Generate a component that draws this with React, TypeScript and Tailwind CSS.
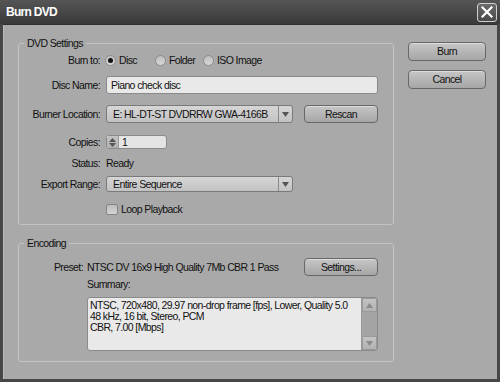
import React from "react";

const font = "font-['Liberation_Sans',Arial,sans-serif]";

function Button({ label, className = "" }: { label: string; className?: string }) {
  return (
    <div
      className={`flex items-center justify-center rounded-[4px] border border-[#686868] bg-gradient-to-b from-[#c6c6c6] to-[#a6a6a6] shadow-[inset_0_1px_0_#dcdcdc] ${className}`}
    >
      {label}
    </div>
  );
}

function Select({ value }: { value: string }) {
  return (
    <div className="flex h-full w-[187px] rounded-[3px] border border-[#7a7a7a] bg-gradient-to-b from-[#d6d6d6] to-[#c2c2c2]">
      <div className="flex flex-1 items-center pl-[6px]">{value}</div>
      <div className="flex w-[14px] items-center justify-center border-l border-[#8a8a8a]">
        <svg width="7" height="5" viewBox="0 0 7 5">
          <path d="M0 0H7L3.5 5Z" fill="#555" />
        </svg>
      </div>
    </div>
  );
}

function Radio({ checked }: { checked?: boolean }) {
  return (
    <div className="flex h-[11px] w-[11px] items-center justify-center rounded-full border border-[#8c8c8c] bg-gradient-to-b from-[#bdbdbd] to-[#d8d8d8]">
      {checked && <div className="h-[5px] w-[5px] rounded-full bg-[#111]" />}
    </div>
  );
}

function Row({ label, className = "", children }: { label: string; className?: string; children?: React.ReactNode }) {
  return (
    <div className={`flex items-center ${className}`}>
      <div className="w-[81px] shrink-0 text-right">{label}</div>
      <div className="ml-[6px] flex h-full items-center">{children}</div>
    </div>
  );
}

export default function App() {
  return (
    <div className={`flex h-[382px] w-[500px] flex-col whitespace-nowrap bg-[#474747] text-[10.5px] leading-[13px] tracking-[-0.6px] text-[#111] ${font}`}>
      {/* Title bar */}
      <div className="flex h-[24px] items-center justify-between bg-gradient-to-b from-[#555] to-[#3a3a3a] pl-[6px] pr-[3px]">
        <span className="text-[12px] font-bold tracking-[-0.7px] text-white">Burn DVD</span>
        <div className="flex h-[19px] w-[20px] items-center justify-center rounded-[3px] border border-[#cfcfcf] bg-gradient-to-b from-[#6a6a6a] to-[#4a4a4a]">
          <svg width="12" height="12" viewBox="0 0 12 12">
            <path d="M1.5 1.5L10.5 10.5M10.5 1.5L1.5 10.5" stroke="#fff" strokeWidth="2.2" strokeLinecap="square" />
          </svg>
        </div>
      </div>

      {/* Body */}
      <div className="mx-[3px] mb-[3px] flex flex-1 border-t border-[#2e2e2e] bg-[#a9a9a9] pl-[15px] pt-[11px] shadow-[inset_1px_0_0_#bcbcbc]">
        <div className="flex w-[376px] flex-col">
          {/* DVD Settings */}
          <fieldset className="h-[189px] rounded-[3px] border border-[#c4c4c4]">
            <legend className="ml-[5px] px-[3px] leading-[14px]">DVD Settings</legend>

            <Row label="Burn to:" className="mt-[2px] h-[16px]">
              <div className="-ml-[3px] flex items-center">
                <div className="flex w-[52px] items-center pl-[2px]">
                  <Radio checked />
                  <span className="ml-[3px]">Disc</span>
                </div>
                <div className="flex w-[48px] items-center">
                  <Radio />
                  <span className="ml-[3px]">Folder</span>
                </div>
                <div className="flex items-center">
                  <Radio />
                  <span className="ml-[3px]">ISO Image</span>
                </div>
              </div>
            </Row>

            <Row label="Disc Name:" className="mt-[8px] h-[18px]">
              <div className="flex h-full w-[272px] items-center rounded-[3px] border border-[#8a8a8a] bg-[#e9e9e9] pl-[4px]">
                Piano check disc
              </div>
            </Row>

            <Row label="Burner Location:" className="mt-[11px] h-[18px]">
              <Select value="E: HL-DT-ST DVDRRW GWA-4166B" />
              <Button label="Rescan" className="ml-[11px] h-full w-[74px]" />
            </Row>

            <Row label="Copies:" className="mt-[12px] h-[14px]">
              <div className="flex h-full w-[61px] items-center rounded-[3px] border border-[#8a8a8a] bg-[#e4e4e4]">
                <div className="flex h-full w-[12px] flex-col items-center justify-center gap-[1px] border-r border-[#9a9a9a] bg-gradient-to-b from-[#c4c4c4] to-[#b0b0b0]">
                  <svg width="7" height="4" viewBox="0 0 7 4">
                    <path d="M0 4H7L3.5 0Z" fill="#555" />
                  </svg>
                  <svg width="7" height="4" viewBox="0 0 7 4">
                    <path d="M0 0H7L3.5 4Z" fill="#555" />
                  </svg>
                </div>
                <span className="ml-[3px]">1</span>
              </div>
            </Row>

            <Row label="Status:" className="mt-[7px] h-[14px]">
              Ready
            </Row>

            <Row label="Export Range:" className="mt-[6px] h-[16px]">
              <Select value="Entire Sequence" />
            </Row>

            <Row label="" className="mt-[10px] h-[14px]">
              <div className="h-[11px] w-[12px] rounded-[2px] border border-[#858585] bg-gradient-to-b from-[#bcbcbc] to-[#d4d4d4]" />
              <span className="ml-[3px]">Loop Playback</span>
            </Row>
          </fieldset>

          {/* Encoding */}
          <fieldset className="mt-[11px] h-[126px] rounded-[3px] border border-[#c4c4c4] pr-[15px]">
            <legend className="ml-[5px] px-[3px] leading-[14px]">Encoding</legend>

            <div className="mt-[8px] flex h-[18px] items-center">
              <div className="w-[64px] text-right">Preset:</div>
              <div className="ml-[4px]">NTSC DV 16x9 High Quality 7Mb CBR 1 Pass</div>
              <Button label="Settings..." className="ml-auto h-full w-[74px]" />
            </div>

            <div className="mt-[1px] flex h-[14px] items-center pl-[68px]">Summary:</div>

            <div className="ml-[68px] mt-[6px] flex h-[54px] w-[291px] rounded-[3px] border border-[#8a8a8a] bg-[#e9e9e9]">
              <div className="flex-1 px-[2px] pt-[2px] leading-[11px]">
                <div>NTSC, 720x480, 29.97 non-drop frame [fps], Lower, Quality 5.0</div>
                <div>48 kHz, 16 bit, Stereo, PCM</div>
                <div>CBR, 7.00 [Mbps]</div>
              </div>
              <div className="flex w-[16px] flex-col justify-between border-l border-[#9a9a9a] bg-[#a4a4a4]">
                <div className="flex h-[14px] items-center justify-center border border-[#999] bg-gradient-to-b from-[#c4c4c4] to-[#b2b2b2]">
                  <svg width="7" height="5" viewBox="0 0 7 5">
                    <path d="M0 5H7L3.5 0Z" fill="#8a8a8a" />
                  </svg>
                </div>
                <div className="flex h-[14px] items-center justify-center border border-[#999] bg-gradient-to-b from-[#c4c4c4] to-[#b2b2b2]">
                  <svg width="7" height="5" viewBox="0 0 7 5">
                    <path d="M0 0H7L3.5 5Z" fill="#8a8a8a" />
                  </svg>
                </div>
              </div>
            </div>
          </fieldset>
        </div>

        {/* Buttons */}
        <div className="ml-[14px] flex flex-col gap-[9px] pt-[6px]">
          <Button label="Burn" className="h-[19px] w-[78px]" />
          <Button label="Cancel" className="h-[19px] w-[78px]" />
        </div>
      </div>
    </div>
  );
}
